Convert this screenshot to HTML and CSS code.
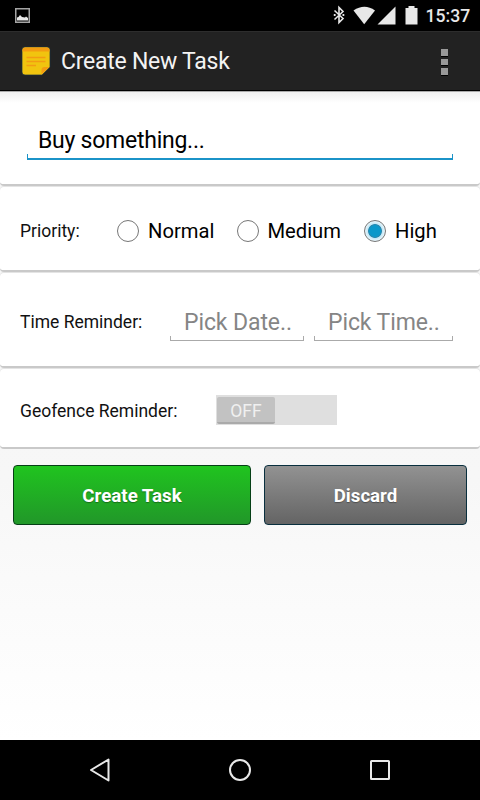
FILE: index.html
```html
<!DOCTYPE html>
<html lang="en">
<head>
<meta charset="utf-8">
<title>Create New Task</title>
<link rel="stylesheet" href="styles.css">
</head>
<body>
<div class="screen">
  <header class="status">
    <svg class="shot" width="15" height="15" viewBox="0 0 15 15"><rect x=".75" y=".75" width="13.5" height="13.5" fill="none" stroke="#a5a5a5" stroke-width="1.5"/><path d="M2 12.5V9.5L3.5 9 5 7l2 2 3 .5 1-1L13 10v2.500z" fill="#e8e8e8"/></svg>
    <svg class="icons" width="88" height="20" viewBox="0 0 88 20" fill="#e8e8e8"><path d="M1.500 5.500l8.500 8-4 4V2.500l4 4-8.500 8" fill="none" stroke="#e8e8e8" stroke-width="1.600"/><path d="M.8 9.100h1.800v1.800H.8zM9.500 9.100h1.800v1.800H9.500z"/><path d="M20.500 5.500Q31.500 -2 42 5.500L31.200 19.200z"/><path d="M62.500 1.500v18H44.500z"/><path d="M72.500 3h3V1h6v2h3v16.500H72.500z"/></svg>
    <span class="clock">15:37</span>
  </header>
  <div class="bar">
    <svg class="note" width="30" height="30" viewBox="0 0 30 30"><path d="M4 1h22q3 0 3 3v17l-8 8H4q-3 0-3-3V4q0-3 3-3z" fill="#f1c40f" stroke="#173044" stroke-width=".7"/><path d="M1.500 5.500V4Q1.500 1.500 4 1.500h22q2.500 0 2.500 2.500v1.500zM20.500 28.500V24q0-3 3-3h5z" fill="#f39c12"/><path d="M5.500 11.500h19M5.500 15.500h19M5.500 19.500h9.500" stroke="#f39c12" stroke-width="1.600"/></svg>
    <h1>Create New Task</h1>
    <div class="more"><i></i><i></i><i></i></div>
  </div>
  <main>
    <section class="card name"><div class="field focus"><span>Buy something...</span></div></section>
    <section class="card priority">
      <span class="label">Priority:</span>
      <div class="option normal"><i class="radio"></i><span>Normal</span></div>
      <div class="option medium"><i class="radio"></i><span>Medium</span></div>
      <div class="option high"><i class="radio on"></i><span>High</span></div>
    </section>
    <section class="card time"><span class="label">Time Reminder:</span>
      <div class="field date"><span>Pick Date..</span></div>
      <div class="field hour"><span>Pick Time..</span></div>
    </section>
    <section class="card geo"><span class="label">Geofence Reminder:</span><div class="switch"><span>OFF</span></div></section>
    <div class="actions"><button class="create">Create Task</button><button class="discard">Discard</button></div>
  </main>
  <nav>
    <svg width="22" height="26" viewBox="0 0 22 26"><path d="M19.500 2.500v21L2 13z"/></svg>
    <svg width="24" height="26" viewBox="0 0 24 26"><circle cx="12" cy="13" r="10"/></svg>
    <svg width="22" height="26" viewBox="0 0 22 26"><rect x="2" y="4" width="18" height="18" rx=".5"/></svg>
  </nav>
</div>
</body>
</html>
```
FILE: styles.css
```css
* { box-sizing: border-box; }
body { margin: 0; font-family: Roboto, "Liberation Sans", sans-serif; color: #000; }
.screen { width: 480px; height: 800px; display: flex; flex-direction: column; overflow: hidden; }
svg { display: block; flex: none; }
span, h1 { white-space: nowrap; }
.status { height: 31px; background: #000; display: flex; align-items: flex-start; padding: 0 10px 0 15px; }
.shot { margin-top: 8px; }
.icons { margin: 5px 0 0 302.500px; }
.clock { margin: 6px 0 0 5px; font-size: 17.600px; line-height: 21px; font-weight: 500; color: #e8e8e8; }
.bar { height: 60px; background: #222; border-top: 1px solid #2d2d2d; border-bottom: 1px solid #000; display: flex; align-items: center; padding: 0 32px 0 21px; }
.note { margin-top: 0; }
h1 { margin: 2px 0 0 10px; font-size: 23px; letter-spacing: -.25px; line-height: 28px; font-weight: 400; color: #f3f3f3; }
.more { margin: 2px 0 0 auto; display: grid; gap: 3px; }
.more i { width: 7px; height: 6.500px; background: #999; box-shadow: 0 1px #000; }
main { flex: 1; background: linear-gradient(#f5f5f5, #f7f7f7 60%, #fff); }
.card { display: flex; background: #fff; border-bottom: 2px solid #c9c9c9; border-radius: 4px; box-shadow: 0 -1px #e4e4e4; margin-bottom: 1px; }
.name { height: 95px; padding: 31px 27px 0; background: linear-gradient(#eee, #fff 12px); box-shadow: inset 0 1px #aaa; border-radius: 0 0 4px 4px; }
.field { height: 38px; position: relative; border-bottom: 1px solid #aaa; color: #858585; font-size: 23px; letter-spacing: -.1px; line-height: 40px; }
.field::after { content: ""; position: absolute; left: 0; right: 0; bottom: 0; height: 4px; border: solid #aaa; border-width: 0 1px; }
.focus { width: 426px; border-bottom: 2px solid #1b93c8; color: #000; padding-left: 11px; letter-spacing: -.25px; line-height: 38px; }
.focus::after { border-color: #1b93c8; }
.label { font-size: 17.500px; line-height: 24px; color: #111; flex: none; }
.priority { height: 85px; padding: 4px 20px 0; align-items: center; margin-top: 1px; }
.priority .label { width: 97px; }
.time .label { width: 151px; }
.geo .label { width: 196px; padding-top: 2px; }
.option { display: flex; align-items: center; gap: 9px; font-size: 20.200px; line-height: 26px; }
.radio { width: 22px; height: 22px; border: 1px solid #777; border-radius: 50%; }
.normal { width: 119.500px; }
.medium { width: 127.500px; }
.on { background: radial-gradient(circle, #0a98ca 0 5.500px, #288ab0 6px 6.500px, #c5e7f5 7.300px, #eaf7fc 10px); }
.time { height: 95px; padding: 4px 20px 0; align-items: center; }
.date { width: 134px; margin-left: -1px; padding-left: 14px; }
.hour { width: 139px; margin-left: 10px; padding-left: 14px; }
.geo { height: 80px; padding: 4px 20px 0; align-items: center; }
.switch { width: 121px; height: 30px; padding: 2px 1px 1px; background: #dfdfdf; }
.switch span { display: block; width: 58px; height: 27px; background: #c2c2c2; border-bottom: 2px solid #aaa; border-radius: 2px; color: #f0f0f0; font-size: 17.500px; line-height: 28px; text-align: center; }
.actions { display: flex; gap: 13px; padding: 15px 13px; }
button { height: 60px; border-radius: 4px; padding: 2px 0 0; color: #fff; font: 700 18.700px/24px Roboto, sans-serif; text-shadow: 0 1px 1px #0005; }
.create { width: 238px; border: 1px solid #063f16; background: linear-gradient(#20c41f, #219729); }
.discard { width: 203px; border: 1px solid #092f3e; background: linear-gradient(#929292, #646464); }
nav { height: 60px; background: #000; display: flex; justify-content: space-between; align-items: center; padding: 0 89px; }
nav svg { fill: none; stroke: #e9e9e9; stroke-width: 2; stroke-linejoin: round; }
```
